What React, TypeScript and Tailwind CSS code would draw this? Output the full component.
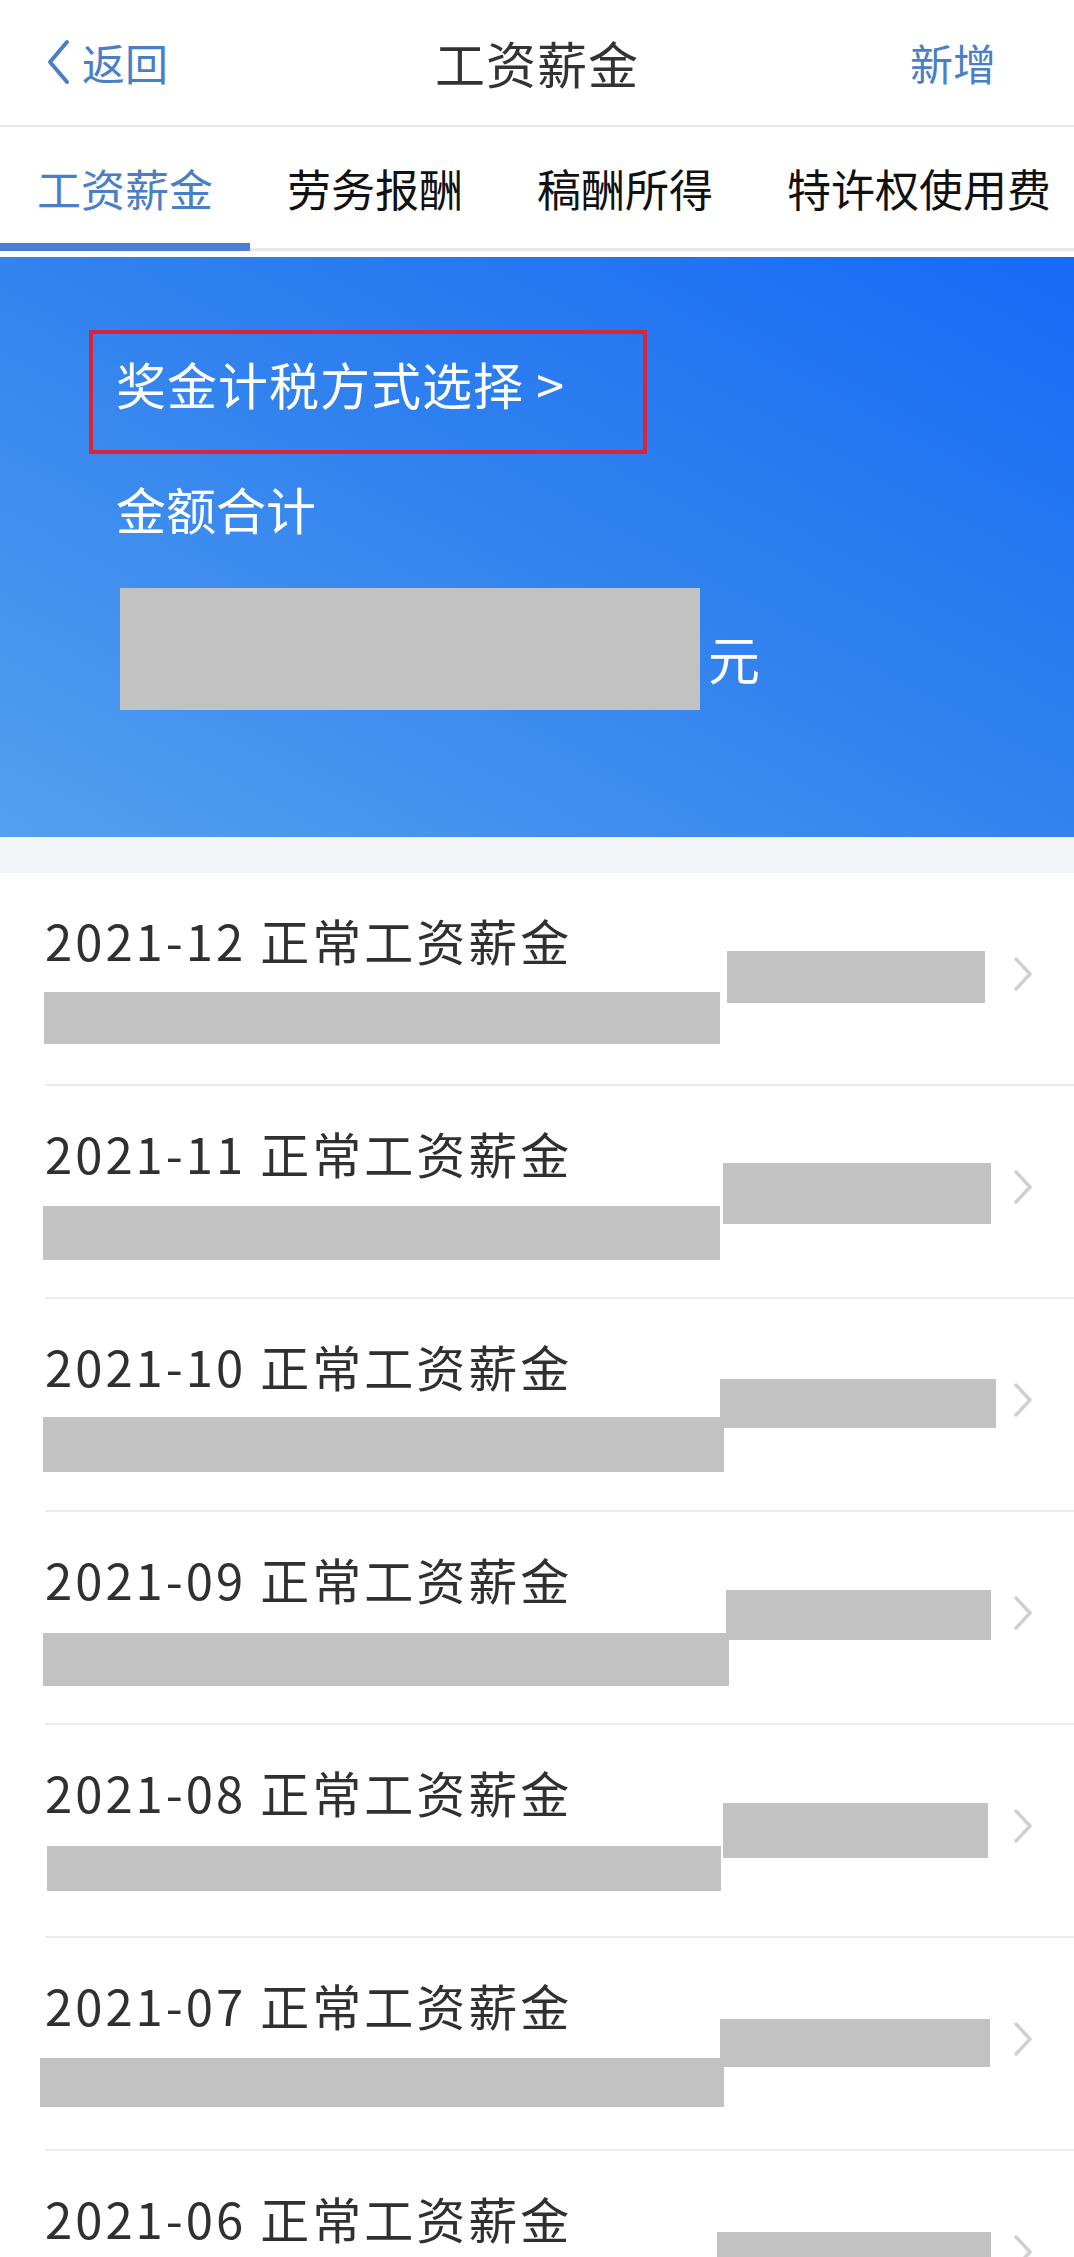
import React from "react";

type Item = {
  month: string;
  left: { top: number; dx: number; w: number; h: number };
  right: { top: number; x: number; w: number; h: number };
};

const items: Item[] = [
  { month: "2021-12", left: { top: 119, dx: -1, w: 676, h: 52 }, right: { top: 78, x: 727, w: 258, h: 52 } },
  { month: "2021-11", left: { top: 120, dx: -2, w: 677, h: 54 }, right: { top: 77, x: 723, w: 268, h: 61 } },
  { month: "2021-10", left: { top: 118, dx: -2, w: 681, h: 55 }, right: { top: 80, x: 720, w: 276, h: 49 } },
  { month: "2021-09", left: { top: 121, dx: -2, w: 686, h: 53 }, right: { top: 78, x: 726, w: 265, h: 50 } },
  { month: "2021-08", left: { top: 121, dx: 2, w: 674, h: 45 }, right: { top: 78, x: 723, w: 265, h: 55 } },
  { month: "2021-07", left: { top: 120, dx: -5, w: 684, h: 49 }, right: { top: 81, x: 720, w: 270, h: 48 } },
  { month: "2021-06", left: { top: 122, dx: -3, w: 680, h: 52 }, right: { top: 81, x: 717, w: 274, h: 52 } },
];

const font = { fontFamily: '"Noto Sans CJK SC", "Noto Sans", sans-serif' };

function Chevron() {
  return (
    <svg width="20" height="34" viewBox="0 0 20 34" className="shrink-0 mt-[84px]">
      <path d="M3 2 L17 17 L3 32" fill="none" stroke="#d0d0d0" strokeWidth="3.5" strokeLinecap="round" strokeLinejoin="round" />
    </svg>
  );
}

export default function App() {
  const tabs = ["工资薪金", "劳务报酬", "稿酬所得", "特许权使用费"];
  return (
    <div className="w-[1074px] h-[2257px] overflow-hidden bg-white" style={font}>
      {/* Header */}
      <div className="h-[127px] border-b-2 border-[#e6e6e6] grid grid-cols-[1fr_auto_1fr] items-center pb-[2px]">
        <div className="flex items-center pl-[45px]">
          <svg width="26" height="46" viewBox="0 0 26 46" className="shrink-0">
            <path d="M22 3 L5 23 L22 43" fill="none" stroke="#4b7fc5" strokeWidth="4" strokeLinecap="round" strokeLinejoin="round" />
          </svg>
          <span className="ml-[11px] text-[43px] leading-[46px] text-[#4b7fc5]">返回</span>
        </div>
        <div className="text-[50px] leading-[52px] text-[#333333] tracking-[1px]">工资薪金</div>
        <div className="flex justify-end pr-[78px]">
          <span className="text-[43px] leading-[46px] text-[#4b7fc5]">新增</span>
        </div>
      </div>

      {/* Tabs */}
      <div className="h-[124px] flex whitespace-nowrap overflow-hidden shadow-[inset_0_-3px_0_#e8e8e8]">
        {tabs.map((t, i) => (
          <div
            key={t}
            className={
              i === 0
                ? "shrink-0 flex items-center px-[37px] pt-[6px] border-b-[8px] border-[#4a7fd4] text-[44px] leading-[46px] text-[#4b7fc5]"
                : "shrink-0 flex items-center px-[37px] pb-[2px] text-[44px] leading-[46px] text-[#111111]"
            }
          >
            {t}
          </div>
        ))}
      </div>
      <div className="h-[6px] bg-white" />

      {/* Banner */}
      <div className="h-[580px] bg-linear-to-tr from-[#539ff0] via-[#3283ee] to-[#176af5] pl-[89px] pt-[73px]">
        <div className="w-[558px] h-[124px] border-[4px] border-[#d6253a] pl-[23px] pt-[24px]">
          <span className="text-[50px] leading-[50px] text-white tracking-[1px] whitespace-nowrap">
            奖金计税方式选择 &gt;
          </span>
        </div>
        <div className="pl-[27px]">
          <div className="mt-[29px] text-[50px] leading-[50px] text-white">金额合计</div>
          <div className="mt-[55px] flex items-start">
            <div className="ml-[4px] w-[580px] h-[122px] bg-[#c2c2c2]" />
            <span className="ml-[8px] mt-[44px] text-[52px] leading-[52px] text-white">元</span>
          </div>
        </div>
      </div>

      <div className="h-[36px] bg-[#f4f5f9]" />

      {/* List */}
      <div>
        {items.map((it) => (
          <div key={it.month} className="ml-[45px] h-[213px] border-b-2 border-[#ebebeb] flex items-start pr-[41px]">
            <div className="w-[676px] shrink-0 flex flex-col">
              <div className="mt-[43px] text-[49px] leading-[48px] tracking-[3px] text-[#303030] whitespace-nowrap">
                {it.month} 正常工资薪金
              </div>
              <div
                className="bg-[#c2c2c2] shrink-0"
                style={{ marginTop: it.left.top - 91, marginLeft: it.left.dx, width: it.left.w, height: it.left.h }}
              />
            </div>
            <div
              className="bg-[#c2c2c2] shrink-0"
              style={{ marginTop: it.right.top, marginLeft: it.right.x - 721, width: it.right.w, height: it.right.h }}
            />
            <div className="flex-1" />
            <Chevron />
          </div>
        ))}
      </div>
    </div>
  );
}
